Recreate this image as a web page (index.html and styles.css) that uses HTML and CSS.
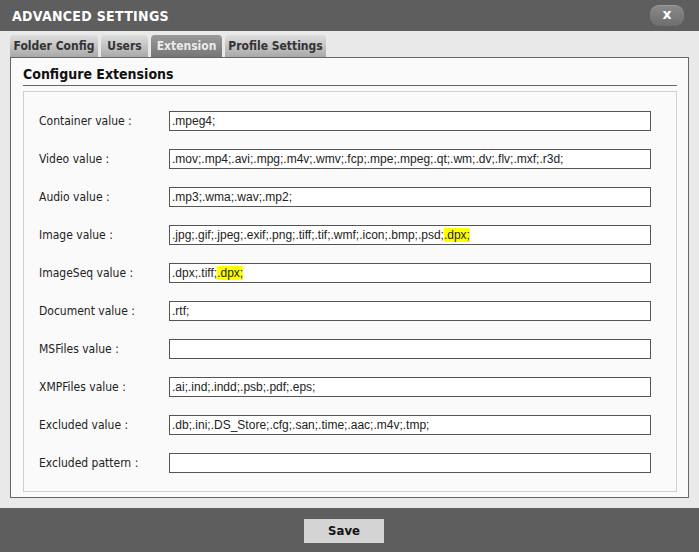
FILE: index.html
```html
<!DOCTYPE html>
<html>
<head>
<meta charset="utf-8">
<link rel="stylesheet" href="styles.css">
</head>
<body>
<div class="dialog">
  <div class="titlebar">
    <span class="title">ADVANCED SETTINGS</span>
    <span class="close">x</span>
  </div>
  <div class="main">
    <div class="tabs">
      <div class="tab t1">Folder Config</div>
      <div class="tab t2">Users</div>
      <div class="tab t3 active">Extension</div>
      <div class="tab t4">Profile Settings</div>
    </div>
    <div class="panel">
      <div class="heading">Configure Extensions</div>
      <div class="box">
        <div class="row"><label>Container value :</label><div class="input">.mpeg4;</div></div>
        <div class="row"><label>Video value :</label><div class="input">.mov;.mp4;.avi;.mpg;.m4v;.wmv;.fcp;.mpe;.mpeg;.qt;.wm;.dv;.flv;.mxf;.r3d;</div></div>
        <div class="row"><label>Audio value :</label><div class="input">.mp3;.wma;.wav;.mp2;</div></div>
        <div class="row"><label>Image value :</label><div class="input">.jpg;.gif;.jpeg;.exif;.png;.tiff;.tif;.wmf;.icon;.bmp;.psd;<span class="hl">.dpx;</span></div></div>
        <div class="row"><label>ImageSeq value :</label><div class="input">.dpx;.tiff;<span class="hl">.dpx;</span></div></div>
        <div class="row"><label>Document value :</label><div class="input">.rtf;</div></div>
        <div class="row"><label>MSFiles value :</label><div class="input"></div></div>
        <div class="row"><label>XMPFiles value :</label><div class="input">.ai;.ind;.indd;.psb;.pdf;.eps;</div></div>
        <div class="row"><label>Excluded value :</label><div class="input">.db;.ini;.DS_Store;.cfg;.san;.time;.aac;.m4v;.tmp;</div></div>
        <div class="row"><label>Excluded pattern :</label><div class="input"></div></div>
      </div>
    </div>
  </div>
  <div class="footer">
    <div class="save">Save</div>
  </div>
</div>
</body>
</html>
```
FILE: styles.css
```css
html, body {
  margin: 0;
  padding: 0;
}
body {
  width: 699px;
  height: 552px;
  overflow: hidden;
  font-family: "DejaVu Sans Condensed", "DejaVu Sans", sans-serif;
}
.dialog {
  display: flex;
  flex-direction: column;
  height: 552px;
}
.titlebar {
  height: 31px;
  background: #5e5e5e;
  display: flex;
  align-items: center;
  justify-content: space-between;
  padding: 0 15px 0 12px;
}
.title {
  color: #fff;
  font-weight: bold;
  font-size: 14px;
  letter-spacing: 0.3px;
}
.close {
  width: 34px;
  height: 21px;
  border-radius: 9px;
  background: linear-gradient(#8a8a8a, #6e6e6e);
  color: #fff;
  font-family: "DejaVu Sans", sans-serif;
  font-weight: bold;
  font-size: 14px;
  line-height: 19px;
  text-align: center;
  box-shadow: inset 0 1px 0 rgba(255,255,255,0.15);
}
.main {
  flex: 1;
  background: #e9e9e9;
  padding: 4px 10px 10px 10px;
  display: flex;
  flex-direction: column;
}
.tabs {
  display: flex;
  gap: 3px;
  height: 22px;
}
.tab {
  height: 22px;
  line-height: 22px;
  border-radius: 4px 4px 0 0;
  background: linear-gradient(#dedede, #a9a9a9);
  color: #333;
  font-weight: bold;
  font-size: 12px;
  text-align: center;
}
.t1 { width: 88px; }
.t2 { width: 47px; }
.t3 { width: 71px; }
.t4 { width: 101px; }
.tab.active {
  background: linear-gradient(#9a9a9a, #767676);
  color: #ececec;
}
.panel {
  flex: 1;
  border: 1px solid #666;
  background: #fafafa;
  padding: 0 11px 5px 12px;
  display: flex;
  flex-direction: column;
}
.heading {
  font-weight: bold;
  font-size: 14px;
  color: #111;
  padding-top: 6px;
  line-height: 21px;
  border-bottom: 1px solid #666;
  margin-bottom: 5px;
}
.box {
  flex: 1;
  border: 1px solid #cfcfcf;
  padding: 19px 25px 0 15px;
  display: flex;
  flex-direction: column;
  gap: 18px;
}
.row {
  display: flex;
  align-items: center;
  height: 20px;
}
.row label {
  width: 130px;
  font-size: 12px;
  color: #222;
}
.input {
  flex: 1;
  height: 18px;
  border: 1px solid #555;
  background: #fff;
  font-family: "Liberation Sans", Arial, sans-serif;
  font-size: 12px;
  line-height: 18px;
  padding-left: 2px;
  color: #222;
  white-space: nowrap;
  overflow: hidden;
}
.hl {
  background: #ffff00;
}
.footer {
  height: 44px;
  background: #5e5e5e;
  display: flex;
  justify-content: center;
  align-items: flex-start;
  padding-right: 11px;
}
.save {
  margin-top: 11px;
  width: 80px;
  height: 24px;
  line-height: 24px;
  background: #d4d4d4;
  color: #111;
  font-weight: bold;
  font-size: 13px;
  text-align: center;
}
```
